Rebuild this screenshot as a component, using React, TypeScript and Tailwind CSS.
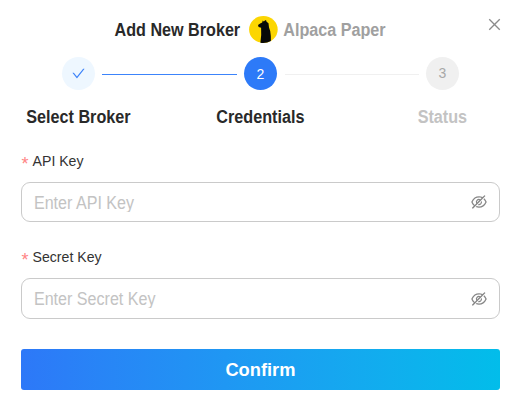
import React, { useState } from 'react';
import { AiOutlineCheck, AiOutlineClose, AiOutlineEyeInvisible } from 'react-icons/ai';

interface FieldProps {
    label: string;
    placeholder: string;
    className: string;
}

const AlpacaLogo: React.FC = () => (
    <svg className="w-[29px] h-[27px] shrink-0" viewBox="0 0 29 27" aria-hidden="true">
        <ellipse cx="14.4" cy="13.5" rx="14.3" ry="13.4" fill="#fcd602" />
        <path
            d="M11.4 26.7 L12.2 19 L12.1 11.8 L9.6 11 L9 9 L11.6 7.2 L13.2 6.5 L13.7 4.6 L14.8 5.6 L16.2 4.3 L17.1 4.2 L17.6 5.8 L19.5 7.2 L20 11.5 L21.2 15 L21.8 20 L21.9 25 Q17 27.6 11.4 26.7 Z"
            fill="#080808"
        />
    </svg>
);

const Field: React.FC<FieldProps> = ({ label, placeholder, className }) => {
    const [value, setValue] = useState('');

    return (
        <label className="block">
            <span className="flex h-[22px] items-center text-[14.1px] text-[#333333]">
                <span className="w-[11.2px] text-[18px] leading-none text-[#ff8585] pt-[3px]">*</span>
                {label}
            </span>
            <span className={`flex items-center rounded-[9px] border border-[#cacaca] pl-[11.5px] pr-[11px] ${className}`}>
                <input
                    type="password"
                    value={value}
                    onChange={(e) => setValue(e.target.value)}
                    placeholder={placeholder}
                    className="min-w-0 flex-1 origin-center scale-y-[1.09] bg-transparent text-[16.1px] outline-none placeholder:text-[#c3c3c3]"
                />
                <AiOutlineEyeInvisible className="size-[18px] text-[#868686]" />
            </span>
        </label>
    );
};

const App: React.FC = () => {
    return (
        <div className="h-[408px] w-[519px] bg-white pl-[21.4px] pr-[19.5px] font-['Liberation_Sans',Arial,sans-serif]">
            {/* Title */}
            <div className="flex h-[57px] pt-[16px]">
                <div className="flex h-[27px] flex-1 items-center pl-[93.2px] text-[16.15px] font-bold">
                    <h2 className="mr-[8.6px] scale-y-[1.09] text-[#292929]">Add New Broker</h2>
                    <AlpacaLogo />
                    <span className="ml-[5.5px] scale-y-[1.09] text-[#a0a0a0]">Alpaca Paper</span>
                </div>
                <button aria-label="Close" className="-mr-[3px] size-[17px]">
                    <AiOutlineClose className="size-[17px] text-[#8b8b8b]" />
                </button>
            </div>

            {/* Steps */}
            <div className="flex h-[33px] items-center pl-[40.6px] pr-[40.5px] text-[14px]">
                <div className="flex size-[33px] shrink-0 items-center justify-center rounded-full bg-[#eef7ff]">
                    <AiOutlineCheck className="size-[15px] text-[#3d83f9]" />
                </div>
                <div className="mx-[7.5px] mt-px h-px flex-1 bg-[#3c84fb]" />
                <div className="flex size-[33px] shrink-0 items-center justify-center rounded-full bg-[#2d7af8] pt-px text-white">2</div>
                <div className="mx-[7.5px] mt-px h-px flex-1 bg-[#f0f0f0]" />
                <div className="flex size-[33px] shrink-0 items-center justify-center rounded-full bg-[#f0f0f0] text-[#a8a8a8]">3</div>
            </div>
            <div className="mt-[16px] grid scale-y-[1.09] grid-cols-[114px_250px_114px] text-center text-[16.2px] leading-[23px] font-bold text-[#292929]">
                <span>Select Broker</span>
                <span>Credentials</span>
                <span className="text-[#c3c3c3]">Status</span>
            </div>

            {/* Credentials */}
            <form className="mt-[22px]">
                <Field label="API Key" placeholder="Enter API Key" className="mt-[9px] h-[40px]" />
                <div className="h-[25px]" />
                <Field label="Secret Key" placeholder="Enter Secret Key" className="mt-[9px] h-[41px]" />
                <button
                    type="button"
                    className="mt-[30px] h-[41px] w-full rounded-[3px] bg-linear-to-r from-[#2d78f8] to-[#02bdea] text-[18.3px] font-bold text-white"
                >
                    <span className="inline-block scale-y-[1.05]">Confirm</span>
                </button>
            </form>
        </div>
    );
};

export default App;
